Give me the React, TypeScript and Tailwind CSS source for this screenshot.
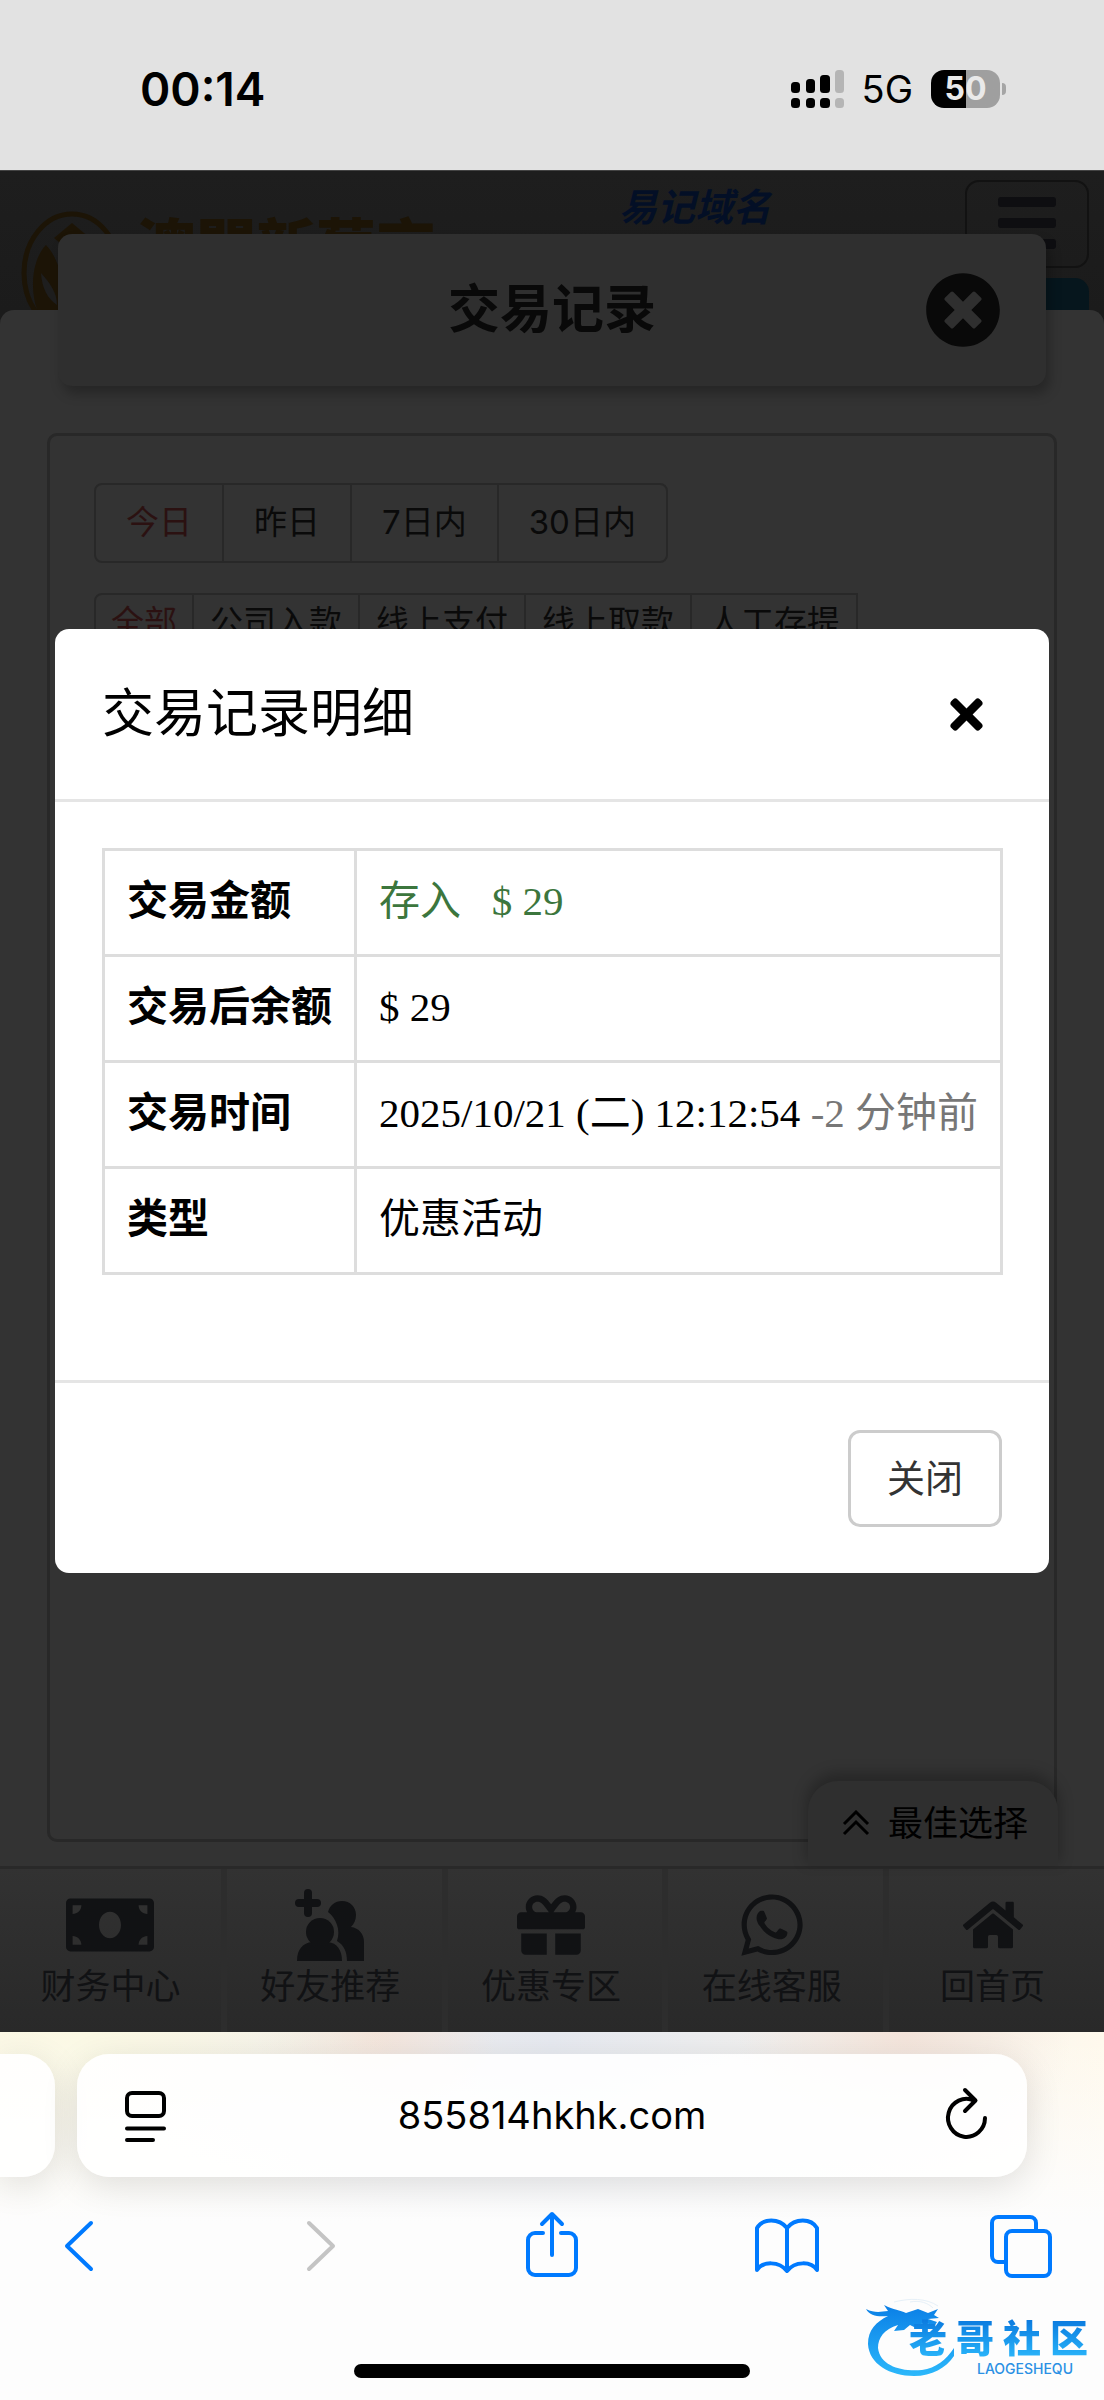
import React from "react";
import {
  FaGift,
  FaHome,
  FaMoneyBill,
  FaTimes,
  FaTimesCircle,
  FaWhatsapp,
} from "react-icons/fa";

const ranges = ["今日", "昨日", "7日内", "30日内"];
const kinds = ["全部", "公司入款", "线上支付", "线上取款", "人工存提"];

function StatusBar() {
  return (
    <div className="flex h-[170px] items-center justify-between bg-[#e2e2e2] pr-[98px] pl-[140px] pt-[8px] text-black">
      <span className="text-[46px] font-semibold">00:14</span>
      <div className="flex items-center">
        <svg className="h-[38px] w-[54px]" viewBox="0 0 54 38" aria-label="信号">
          <rect x="0" y="12" width="9" height="11" rx="3.5" />
          <rect x="15" y="9" width="9" height="14" rx="3.5" />
          <rect x="29" y="5" width="10" height="18" rx="3.5" />
          <rect x="44" y="0" width="9" height="23" rx="3.5" fill="#b5b5b5" />
          <rect x="0" y="28" width="9" height="10" rx="3.5" />
          <rect x="15" y="28" width="9" height="10" rx="3.5" />
          <rect x="29" y="28" width="10" height="10" rx="3.5" />
          <rect x="44" y="28" width="9" height="10" rx="3.5" fill="#b5b5b5" />
        </svg>
        <span className="ml-[17px] text-[38px]">5G</span>
        <div className="ml-[18px] flex h-[38px] w-[69px] items-center justify-center rounded-[13px] bg-linear-to-r from-black from-50% to-[#9f9f9f] to-50% text-[32px] leading-none font-bold text-[#e9e9e9]">
          50
        </div>
        <div className="ml-[2px] h-[12px] w-[4px] rounded-r-full bg-[#a5a5a5]" />
      </div>
    </div>
  );
}

function SiteHeader() {
  return (
    <header className="flex h-[140px] items-start justify-between overflow-hidden border-t border-[#444] bg-linear-to-b from-[#1e1e1e] to-[#1b1b1b] pr-[15px] pl-[20px]">
      <div className="flex pt-[40px]">
        <svg className="h-[124px] w-[104px]" viewBox="0 0 104 124" aria-label="标志">
          <ellipse cx="52" cy="62" rx="48" ry="59" fill="none" stroke="#1c1406" strokeWidth="5" />
          <path d="M52 12 70 27 52 42 34 27Z" fill="#1c1406" />
          <path d="M26 34C10 50 8 90 24 112H84C96 90 94 50 78 34 62 52 62 80 52 100 44 84 42 50 26 34Z" fill="#1c1406" />
          <path d="M21 62C22 78 28 88 37 94 37 82 30 72 21 62Z" fill="#1e1e1e" />
        </svg>
        <span className="ml-[12px] text-[60px] leading-[72px] font-black text-[#1c1406]">澳門新葡京</span>
      </div>
      <div className="flex">
        <a href="#domain" className="mt-[8px] mr-[194px] text-[38px] leading-[56px] font-bold text-[#030f26] italic">易记域名</a>
        <div className="mt-[9px] flex flex-col gap-[10px]">
          <button aria-label="菜单" className="flex h-[88px] w-[124px] flex-col items-center gap-[11px] rounded-[14px] border-2 border-[#121212] pt-[15px]">
            <span className="h-[10px] w-[58px] rounded-[3px] bg-[#0e0e11]" />
            <span className="h-[10px] w-[58px] rounded-[3px] bg-[#0e0e11]" />
            <span className="h-[10px] w-[58px] rounded-[3px] bg-[#0e0e11]" />
          </button>
          <span className="h-[60px] rounded-[14px] bg-[#06161d]" />
        </div>
      </div>
    </header>
  );
}

function RecordsPanel() {
  return (
    <section className="relative flex flex-1 flex-col bg-[#1b1b1b]">
      <div className="flex flex-1 flex-col rounded-t-[14px] bg-[#333] px-[47px]">
        <div className="relative mx-[11px] mt-[-76px] flex h-[152px] items-center justify-center rounded-[14px] bg-[#2f2f2f] shadow-[4px_8px_12px_0_rgba(0,0,0,0.25)]">
          <h1 className="text-[52px] font-bold text-[#090909]">交易记录</h1>
          <button aria-label="关闭页面" className="absolute right-[45px] text-[76px] text-[#090909]">
            <FaTimesCircle />
          </button>
        </div>
        <div className="mt-[47px] mb-[24px] flex-1 rounded-[10px] border-[3px] border-[#282828] px-[44px] pt-[47px]">
          <div className="flex h-[80px] w-fit divide-x-2 divide-[#282828] rounded-[8px] border-2 border-[#282828] text-[33px] text-[#0a0a0a]">
            {ranges.map((r, i) => (
              <button key={r} className={i === 0 ? "px-[30px] text-[#2b1111]" : "px-[30px]"}>{r}</button>
            ))}
          </div>
          <div className="mt-[30px] flex h-[60px] w-fit divide-x-2 divide-[#282828] rounded-tl-[8px] border-2 border-[#282828] text-[33px] text-[#0a0a0a]">
            {kinds.map((k, i) => (
              <button key={k} className={i === 0 ? "px-[15px] text-[#2b1111]" : "px-4"}>{k}</button>
            ))}
          </div>
        </div>
      </div>
      <button className="absolute right-[46px] bottom-0 flex h-[85px] w-[250px] items-center gap-[18px] rounded-t-[30px] bg-[#2f2f2f] pl-[34px] text-[35px] text-black shadow-[0_-6px_14px_2px_rgba(0,0,0,0.25)]">
        <svg className="h-[28px] w-[28px]" viewBox="0 0 28 28" fill="none" stroke="black" strokeWidth="3">
          <path d="M2 14 14 2 26 14M2 24 14 12 26 24" />
        </svg>
        最佳选择
      </button>
    </section>
  );
}

function FriendsIcon() {
  return (
    <svg className="h-[72px] w-[72px]" viewBox="0 0 72 72" fill="currentColor">
      <path d="M14 4V24M5 14H23" stroke="currentColor" strokeWidth="8" strokeLinecap="round" />
      <path d="M34 23C36 16 41 12 48 12C56 12 62 18 62 26C62 31 60 35 57 38C65 39 70 45 70 53V72H53C53 63 50 56 43 52C47 41 42 29 34 23Z" />
      <circle cx="26" cy="43" r="14" />
      <path d="M3 72C3 60 9 54 18 53H34C43 54 48 61 48 72Z" />
    </svg>
  );
}

function BottomNav() {
  const items = [
    { label: "财务中心", icon: <FaMoneyBill className="text-[88px]" /> },
    { label: "好友推荐", icon: <FriendsIcon /> },
    { label: "优惠专区", icon: <FaGift className="text-[68px]" /> },
    { label: "在线客服", icon: <FaWhatsapp className="text-[70px]" /> },
    { label: "回首页", icon: <FaHome className="text-[60px]" /> },
  ];
  return (
    <nav className="grid h-[166px] grid-cols-5 border-t-[3px] border-[#292929] bg-linear-to-b from-[#323232] to-[#292929] text-[#111214]">
      {items.map((item, i) => (
        <a
          key={item.label}
          href="#nav"
          className={i === 0 ? "flex flex-col items-center pt-[19px]" : "flex flex-col items-center border-l-[6px] border-[#2d2d2d] pt-[19px] pr-[8px]"}
        >
          <span className="flex h-[74px] items-center justify-center">{item.icon}</span>
          <span className="text-[35px] leading-[48px]">{item.label}</span>
        </a>
      ))}
    </nav>
  );
}

function DetailDialog() {
  const th = "border-[3px] border-[#ddd] px-[22px] pb-[2px] text-left font-bold whitespace-nowrap";
  const td = "border-[3px] border-[#ddd] px-[22px] pb-[2px] whitespace-nowrap";
  return (
    <div role="dialog" aria-labelledby="detail-title" className="absolute inset-x-[55px] top-[459px] rounded-[14px] bg-white text-black">
      <div className="flex h-[173px] items-center justify-between border-b-[3px] border-[#e5e5e5] pr-[59px] pl-[47px]">
        <h2 id="detail-title" className="text-[52px]">交易记录明细</h2>
        <button aria-label="关闭" className="text-[47px]"><FaTimes /></button>
      </div>
      <div className="px-[47px] pt-[46px] pb-[105px]">
        <table className="w-full border-collapse font-['Liberation_Serif','Noto_Sans_CJK_SC',serif] text-[41px]">
          <tbody>
            <tr className="h-[106px]">
              <th scope="row" className={th}>交易金额</th>
              <td className={td}><span className="whitespace-pre text-[#3c763d]">存入   $ 29</span></td>
            </tr>
            <tr className="h-[106px]">
              <th scope="row" className={th}>交易后余额</th>
              <td className={td}>$ 29</td>
            </tr>
            <tr className="h-[106px]">
              <th scope="row" className={th}>交易时间</th>
              <td className={td}>2025/10/21 (二) 12:12:54 <span className="text-[#777]">-2 分钟前</span></td>
            </tr>
            <tr className="h-[106px]">
              <th scope="row" className={th}>类型</th>
              <td className={td}>优惠活动</td>
            </tr>
          </tbody>
        </table>
      </div>
      <div className="flex justify-end border-t-[3px] border-[#e5e5e5] px-[47px] pt-[47px] pb-[46px]">
        <button className="h-[97px] rounded-[12px] border-[3px] border-[#ccc] px-[36px] text-[38px] text-[#333]">关闭</button>
      </div>
    </div>
  );
}

function ToolIcon({ label, d, tone }: { label: string; d: string; tone: string }) {
  return (
    <button aria-label={label} className={tone}>
      <svg className="h-[72px] w-[66px]" viewBox="0 0 66 72" fill="none" stroke="currentColor" strokeWidth="4" strokeLinecap="round" strokeLinejoin="round">
        <path d={d} />
      </svg>
    </button>
  );
}

function Watermark() {
  return (
    <div className="absolute right-[14px] bottom-[20px] h-[90px] w-[224px]">
      <svg className="absolute inset-0 h-[90px] w-[224px]" viewBox="0 0 224 90" aria-label="龙">
        <defs>
          <linearGradient id="sky" x1="0" y1="0" x2="0" y2="1">
            <stop offset="0" stopColor="#0a7fe6" />
            <stop offset="1" stopColor="#2cb8fb" />
          </linearGradient>
        </defs>
        <path fill="url(#sky)" d="M0 19C8 23 14 22 22 21L18 15C28 20 34 20 40 23L52 19 62 23 72 19 68 25 73 28 62 29 71 32 69 35 57 33 50 38 44 35 38 40 28 41 32 35C18 39 12 48 12 58C14 76 36 82 56 80C70 78 80 70 88 58V66C80 78 66 86 48 86C24 86 3 74 2 54C2 40 10 32 22 26C12 27 4 26 0 19Z" />
        <path d="M28 12C44 8 60 8 72 16M44 12C54 10 62 13 67 18" fill="none" stroke="#e6f0f8" strokeWidth="1" />
      </svg>
      <div className="relative flex flex-col items-end pt-[26px] pr-[2px]">
        <span className="flex gap-[9px] bg-linear-to-b from-[#0a74dc] to-[#2cb8fb] bg-clip-text text-[38px] leading-[44px] font-black text-transparent">
          {["老", "哥", "社", "区"].map((c) => <span key={c}>{c}</span>)}
        </span>
        <span className="mt-[2px] mr-[15px] text-[14px] leading-[14px] font-medium text-[#2b90e4]">LAOGESHEQU</span>
      </div>
    </div>
  );
}

function BrowserBar() {
  const blue = "text-[#007aff]";
  return (
    <footer className="relative h-[368px] overflow-hidden bg-[#fdfdfd]">
      <div className="absolute inset-x-0 top-0 h-[190px] bg-linear-to-r from-[#fef6e8] via-[#e6e9f0] to-[#fff9ec]">
        <div className="h-full bg-[radial-gradient(circle_at_8%_0,#fbf9e4,transparent_30%),radial-gradient(circle_at_34%_0,#f4e4da,transparent_16%),radial-gradient(circle_at_82%_0,#f4e4da,transparent_18%)]" />
        <div className="absolute inset-0 bg-linear-to-b from-transparent to-[#fdfdfd]" />
      </div>
      <div className="relative flex gap-[22px] pt-[22px]">
        <div className="h-[123px] w-[55px] rounded-r-[32px] bg-white/90 shadow-[0_8px_36px_rgba(0,0,0,0.12)]" />
        <div className="mr-[77px] flex h-[123px] flex-1 items-center rounded-[32px] bg-white/90 pr-[29px] pl-[38px] shadow-[0_8px_36px_rgba(0,0,0,0.12)]">
          <button aria-label="页面设置">
            <svg className="h-[62px] w-[62px]" viewBox="0 0 62 62" fill="none" stroke="black" strokeWidth="4" strokeLinecap="round">
              <rect x="12" y="8" width="37" height="23" rx="5" />
              <path d="M12 43.500H49M12 55H38" />
            </svg>
          </button>
          <input aria-label="网址" defaultValue="855814hkhk.com" className="min-w-0 flex-1 bg-transparent pr-[9px] text-center text-[38px] text-black outline-none" />
          <button aria-label="重新加载">
            <svg className="h-[62px] w-[62px]" viewBox="0 0 62 62" fill="none" stroke="black" strokeWidth="4" strokeLinecap="round" strokeLinejoin="round">
              <path d="M49 33A18.500 19 0 1 1 38 15.500M29 5 39.500 15.500 29 26" />
            </svg>
          </button>
        </div>
      </div>
      <div className="relative mt-[33px] flex justify-between pr-[50px] pl-[46px]">
        <ToolIcon label="后退" tone={blue} d="M45 13 21 36 45 59" />
        <ToolIcon label="前进" tone="text-[#c4c4c4]" d="M27 13 51 36 27 59" />
        <ToolIcon label="分享" tone={blue} d="M26 23H18A7 7 0 0 0 11 30V58A7 7 0 0 0 18 65H52A7 7 0 0 0 59 58V30A7 7 0 0 0 52 23H44M35 45V4M25 14 35 4 45 14" />
        <ToolIcon label="书签" tone={blue} d="M34 18C26 8 10 8 4 18V60C10 51 26 51 34 61C42 51 58 51 64 60V18C58 8 42 8 34 18V60" />
        <ToolIcon label="标签页" tone={blue} d="M48 20V13A6 6 0 0 0 42 7H10A6 6 0 0 0 4 13V46A6 6 0 0 0 10 52H17M24 21H56A6 6 0 0 1 62 27V60A6 6 0 0 1 56 66H24A6 6 0 0 1 18 60V27A6 6 0 0 1 24 21" />
      </div>
      <div className="absolute inset-x-0 bottom-[22px] mx-auto h-[14px] w-[396px] rounded-full bg-black" />
      <Watermark />
    </footer>
  );
}

export default function App() {
  return (
    <div lang="zh-CN" className="flex min-h-screen flex-col bg-white font-['Inter','Noto_Sans_CJK_SC',sans-serif]">
      <StatusBar />
      <main className="relative flex flex-1 flex-col">
        <SiteHeader />
        <RecordsPanel />
        <BottomNav />
        <DetailDialog />
      </main>
      <BrowserBar />
    </div>
  );
}
